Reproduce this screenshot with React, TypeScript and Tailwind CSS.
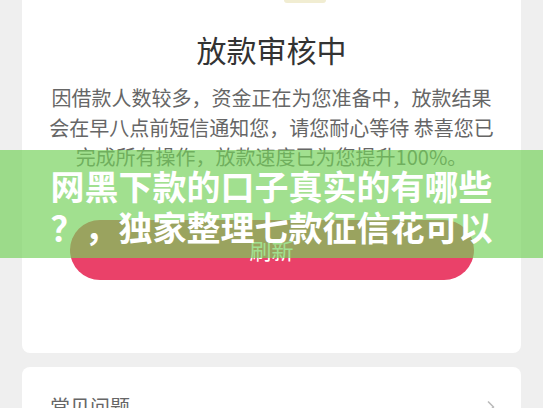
import { ChevronRight } from 'lucide-react';

const font = { fontFamily: '"Noto Sans CJK SC", "Noto Sans", sans-serif' };

export default function App() {
  return (
    <div className="relative h-[408px] w-[543px] overflow-hidden bg-[#efefef]" style={font}>
      <div className="flex flex-col gap-[14px] px-[22px]">
        {/* status card */}
        <div className="flex h-[353px] flex-col items-center rounded-b-[8px] bg-white px-[24px]">
          <div className="h-[3px] w-[42px] translate-x-[33px] rounded-b-full bg-[#f1edd2]" />
          <h1 className="mt-[25px] text-[30px] leading-[42px] text-[#333]">放款审核中</h1>
          <p className="mt-[13px] text-center text-[20px] leading-[29.5px] text-[#666]">
            因借款人数较多，资金正在为您准备中，放款结果
            <br />
            会在早八点前短信通知您，请您耐心等待 恭喜您已
            <br />
            完成所有操作，放款速度已为您提升100%。
          </p>
          <button className="mt-[48px] flex h-[60px] w-[404px] items-center justify-center rounded-full bg-[#ea4169] text-[22px] text-white">
            刷新
          </button>
        </div>

        {/* faq card */}
        <div className="flex items-center justify-between rounded-[8px] bg-white pl-[28px] pr-[20px] pt-[26px] pb-[20px]">
          <span className="text-[20px] leading-[28px] text-[#666]">常见问题</span>
          <ChevronRight className="h-[20px] w-[20px] text-[#bbb]" strokeWidth={2} />
        </div>
      </div>

      {/* green title overlay */}
      <div className="absolute left-0 top-[150px] h-[108px] w-full bg-[rgba(117,209,90,0.68)] pt-[15px] text-center">
        <p className="text-[34px] font-bold leading-[41px] text-white">
          网黑下款的口子真实的有哪些
          <br />
          ？，独家整理七款征信花可以
        </p>
      </div>
    </div>
  );
}
